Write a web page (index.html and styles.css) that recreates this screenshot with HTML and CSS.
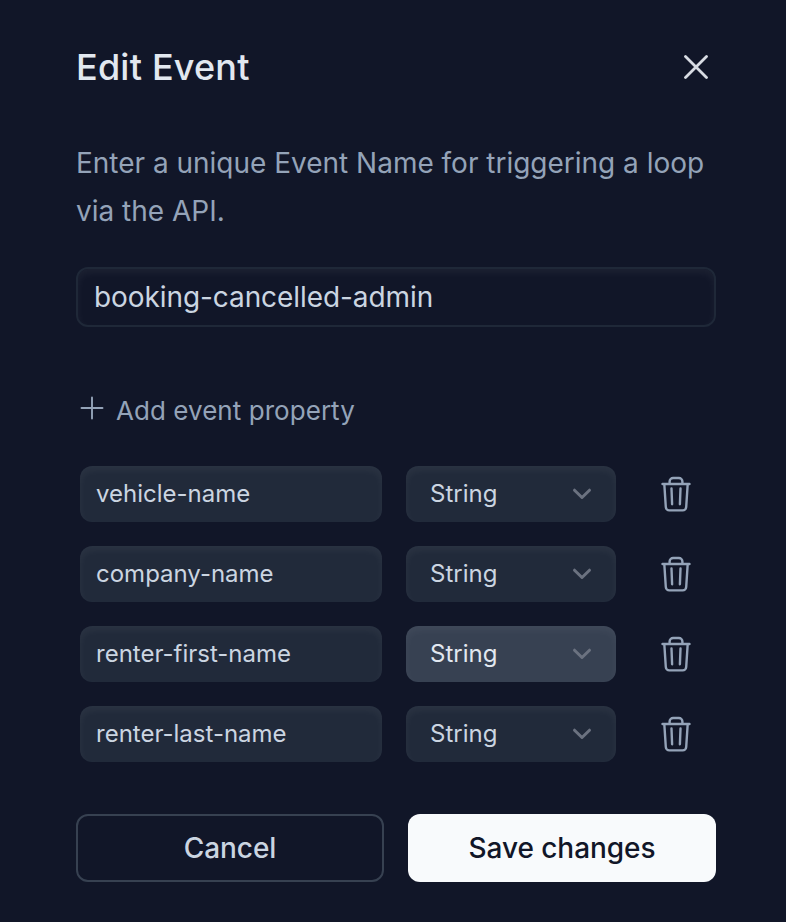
FILE: index.html
```html
<!DOCTYPE html>
<html lang="en">
<head>
<meta charset="utf-8">
<title>Edit Event</title>
<link rel="stylesheet" href="styles.css">
</head>
<body>
<svg class="symbols" aria-hidden="true">
  <symbol id="chevron" viewBox="0 0 20 12"><path d="M2.500 2.200l7.500 7.300 7.500-7.300"/></symbol>
  <symbol id="trash" viewBox="0 0 32 38"><path d="M2.500 9h27M4.300 9l1.500 23a3.500 3.500 0 0 0 3.500 3.400h13.400a3.500 3.500 0 0 0 3.500-3.400L27.700 9M9.600 8V6.500a3.500 3.500 0 0 1 3.500-3.500h5.800a3.500 3.500 0 0 1 3.500 3.500V8M11.500 13.500l.6 15.800M20.500 13.500l-.6 15.800"/></symbol>
</svg>
<main class="dialog">
  <header class="header">
    <h1 class="title">Edit Event</h1>
    <button class="close" aria-label="Close"><svg viewBox="0 0 24 24"><path d="M1.500 1.500l21 21M22.500 1.500l-21 21"/></svg></button>
  </header>
  <p class="description">Enter a unique Event Name for triggering a loop via the API.</p>
  <input class="event-name" aria-label="Event name" value="booking-cancelled-admin">
  <button class="add"><svg viewBox="0 0 24 24"><path d="M12 1.500v21M1.500 12h21"/></svg><span>Add event property</span></button>
  <section class="properties">
    <div class="row"><div class="field name">vehicle-name</div><div class="field type"><span>String</span><svg><use href="#chevron"/></svg></div><button class="delete" aria-label="Delete"><svg><use href="#trash"/></svg></button></div>
    <div class="row"><div class="field name">company-name</div><div class="field type"><span>String</span><svg><use href="#chevron"/></svg></div><button class="delete" aria-label="Delete"><svg><use href="#trash"/></svg></button></div>
    <div class="row"><div class="field name">renter-first-name</div><div class="field type active"><span>String</span><svg><use href="#chevron"/></svg></div><button class="delete" aria-label="Delete"><svg><use href="#trash"/></svg></button></div>
    <div class="row"><div class="field name">renter-last-name</div><div class="field type"><span>String</span><svg><use href="#chevron"/></svg></div><button class="delete" aria-label="Delete"><svg><use href="#trash"/></svg></button></div>
  </section>
  <footer class="actions"><button class="action cancel">Cancel</button><button class="action save">Save changes</button></footer>
</main>
</body>
</html>
```
FILE: styles.css
```css
* { box-sizing: border-box; }
body { margin: 0; background: #111628; color: #cbd5e1; font-family: Inter, sans-serif; }
button { font: inherit; color: inherit; background: none; border: 0; padding: 0; }
svg { fill: none; stroke: currentColor; stroke-linecap: round; stroke-linejoin: round; }
.symbols { display: none; }
.dialog { height: 922px; padding: 43px 70px 40px 76px; display: flex; flex-direction: column; }
.header { height: 48px; display: flex; align-items: center; justify-content: space-between; }
.title { margin: 0; font-size: 36px; line-height: 48px; font-weight: 450; letter-spacing: .2px; color: #e2e8f0; }
.close { width: 24px; height: 24px; margin-right: 8px; color: #d8dce3; }
.close svg { display: block; width: 24px; height: 24px; stroke-width: 2.8; }
.description { margin: 48px 0 0; font-size: 28px; line-height: 48px; letter-spacing: -.01px; color: #94a3b8; }
.event-name { width: 640px; height: 60px; margin-top: 32px; padding: 0 16px; border: 2px solid #1f2838; border-radius: 12px; background: transparent; font: 28px Inter, sans-serif; letter-spacing: -.08px; color: #cbd5e1; box-shadow: inset 0 4px 8px rgba(255, 255, 255, .05); }
.add { margin-top: 64px; height: 38px; padding-left: 4px; display: flex; align-items: center; gap: 12px; font-size: 26px; letter-spacing: .05px; color: #94a3b8; }
.add svg { width: 24px; height: 24px; margin-top: -4px; stroke-width: 1.9; }
.properties { margin: 37px 0 52px 4px; display: grid; gap: 24px; }
.row { display: grid; grid-template-columns: 302px 210px 32px; column-gap: 24px; height: 56px; align-items: center; }
.field { height: 56px; border-radius: 12px; background: #212a3a; display: flex; align-items: center; font-size: 24px; line-height: 30px; box-shadow: inset 0 4px 8px rgba(255, 255, 255, .05); }
.name { padding-left: 16px; }
.type { justify-content: space-between; padding-left: 24px; padding-right: 24px; }
.type svg { width: 20px; height: 12px; stroke-width: 3; color: #6b7280; }
.active { background: #374152; color: #e2e8f0; }
.delete { width: 32px; height: 38px; margin-left: 20px; color: #94a3b8; }
.delete svg { display: block; width: 32px; height: 38px; stroke-width: 2.4; }
.actions { display: grid; grid-template-columns: 308px 308px; gap: 24px; }
.action { height: 68px; border-radius: 12px; font-size: 28px; font-weight: 500; letter-spacing: -.06px; }
.cancel { border: 2px solid #374151; }
.save { background: #f8fafc; color: #111628; }
```
